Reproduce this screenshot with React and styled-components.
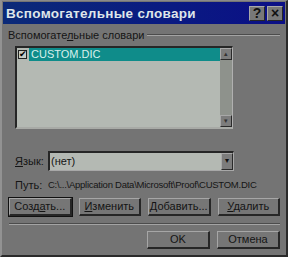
import React from 'react'
import styled, { createGlobalStyle } from 'styled-components'

const Global = createGlobalStyle`
    body {
        margin: 0;
        background: #6e6e6e;
        font-family: "Liberation Sans", Arial, sans-serif;
    }
`

const App = () => {
    return (
        <>
            <Global />
            <Window>
                <TitleBar>
                    <TitleText>Вспомогательные словари</TitleText>
                    <TitleButtons>
                        <CapButton>?</CapButton>
                        <CapButton>×</CapButton>
                    </TitleButtons>
                </TitleBar>
                <Body>
                    <GroupHeader>
                        <span>Вспомогате<u>л</u>ьные словари</span>
                        <GroupLine />
                    </GroupHeader>
                    <ListBox>
                        <ListItems>
                            <ListRow>
                                <Check>✔</Check>
                                <Selected>CUSTOM.DIC</Selected>
                            </ListRow>
                        </ListItems>
                        <ScrollBar>
                            <ScrollBtn>▴</ScrollBtn>
                            <ScrollBtn>▾</ScrollBtn>
                        </ScrollBar>
                    </ListBox>
                    <FieldRow>
                        <FieldLabel><u>Я</u>зык:</FieldLabel>
                        <Combo>
                            <ComboText>(нет)</ComboText>
                            <DropBtn>▾</DropBtn>
                        </Combo>
                    </FieldRow>
                    <PathRow>
                        <FieldLabel>Путь:</FieldLabel>
                        <PathText>C:\...\Application Data\Microsoft\Proof\CUSTOM.DIC</PathText>
                    </PathRow>
                    <ButtonRow>
                        <Button focused>Созд<u>а</u>ть...</Button>
                        <Button><u>И</u>зменить</Button>
                        <Button><u>Д</u>обавить...</Button>
                        <Button><u>У</u>далить</Button>
                    </ButtonRow>
                    <Separator />
                    <ButtonRow end>
                        <Button>OK</Button>
                        <Button>Отмена</Button>
                    </ButtonRow>
                </Body>
            </Window>
        </>
    )
}

export default App

const Window = styled.div`
    width: 288px;
    height: 257px;
    box-sizing: border-box;
    background: #747474;
    border-top: 1px solid #8a8a8a;
    border-left: 2px solid #929292;
    border-right: 2px solid #2a2a2a;
    border-bottom: 2px solid #2a2a2a;
    display: flex;
    flex-direction: column;
    color: #151515;
    overflow: hidden;
`

const TitleBar = styled.div`
    height: 22px;
    margin: 1px 1px 0 1px;
    background: linear-gradient(90deg, #0b2a78 0%, #0a1a82 60%, #0b0f86 100%);
    display: flex;
    align-items: center;
    justify-content: space-between;
    padding: 0 2px 0 3px;
`

const TitleText = styled.div`
    color: #dfe6ea;
    font-weight: bold;
    font-size: 13.5px;
    letter-spacing: 0.3px;
`

const TitleButtons = styled.div`
    display: flex;
    gap: 2px;
`

const CapButton = styled.div`
    width: 16px;
    height: 15px;
    box-sizing: border-box;
    background: #787878;
    border-top: 1px solid #a8a8a8;
    border-left: 1px solid #a8a8a8;
    border-right: 1px solid #262626;
    border-bottom: 1px solid #262626;
    display: flex;
    align-items: center;
    justify-content: center;
    font-weight: bold;
    font-size: 14px;
    line-height: 1;
    color: #111;
`

const Body = styled.div`
    flex: 1;
    display: flex;
    flex-direction: column;
    padding: 4px 6px 0 5px;
`

const GroupHeader = styled.div`
    display: flex;
    align-items: center;
    gap: 3px;
    font-size: 11px;
    height: 14px;
    margin-left: 1px;
`

const GroupLine = styled.div`
    flex: 1;
    height: 0;
    border-top: 1px solid #4c4c4c;
    border-bottom: 1px solid #a4a4a4;
`

const ListBox = styled.div`
    margin: 4px 0 0 8px;
    width: 218px;
    height: 83px;
    box-sizing: border-box;
    background: #b4b9b3;
    border-top: 2px solid #262626;
    border-left: 2px solid #262626;
    border-right: 1px solid #b0b0b0;
    border-bottom: 2px solid #a8aaa6;
    display: flex;
`

const ListItems = styled.div`
    flex: 1;
`

const ListRow = styled.div`
    display: flex;
    align-items: center;
    height: 13px;
`

const Check = styled.div`
    width: 9px;
    height: 9px;
    margin: 0 2px 0 1px;
    box-sizing: border-box;
    background: #c8ccc6;
    border: 1px solid #222;
    font-size: 9px;
    line-height: 7px;
    color: #000;
    text-align: center;
    overflow: hidden;
`

const Selected = styled.div`
    flex: 1;
    height: 13px;
    background: #0f8c8a;
    color: #d8f0ec;
    font-size: 11px;
    line-height: 13px;
    padding-left: 2px;
`

const ScrollBar = styled.div`
    width: 12px;
    background: #8e928c;
    display: flex;
    flex-direction: column;
    justify-content: space-between;
`

const ScrollBtn = styled.div`
    height: 12px;
    box-sizing: border-box;
    background: #7c7c7c;
    border-top: 1px solid #a8a8a8;
    border-left: 1px solid #a8a8a8;
    border-right: 1px solid #2a2a2a;
    border-bottom: 1px solid #2a2a2a;
    font-size: 7px;
    line-height: 10px;
    text-align: center;
    color: #333;
`

const FieldRow = styled.div`
    display: flex;
    align-items: center;
    margin-top: 22px;
    height: 20px;
`

const FieldLabel = styled.div`
    flex-shrink: 0;
    width: 33px;
    padding-left: 8px;
    font-size: 11px;
`

const Combo = styled.div`
    width: 186px;
    height: 20px;
    box-sizing: border-box;
    background: #b4b9b3;
    border-top: 2px solid #262626;
    border-left: 2px solid #262626;
    border-right: 1px solid #a8a8a8;
    border-bottom: 1px solid #a8a8a8;
    display: flex;
    align-items: stretch;
`

const ComboText = styled.div`
    flex: 1;
    font-size: 11px;
    line-height: 17px;
    padding-left: 1px;
`

const DropBtn = styled.div`
    width: 12px;
    box-sizing: border-box;
    background: #7c7c7c;
    border-top: 1px solid #a8a8a8;
    border-left: 1px solid #a8a8a8;
    border-right: 1px solid #2a2a2a;
    border-bottom: 1px solid #2a2a2a;
    font-size: 8px;
    line-height: 14px;
    text-align: center;
    color: #111;
`

const PathRow = styled.div`
    display: flex;
    align-items: center;
    margin-top: 6px;
    height: 15px;
`

const PathText = styled.div`
    font-size: 9.5px;
    letter-spacing: -0.25px;
    white-space: nowrap;
`

const ButtonRow = styled.div`
    display: flex;
    justify-content: ${p => (p.end ? 'flex-end' : 'space-between')};
    gap: 7px;
    margin-top: 6px;
    padding-left: 2px;
`

const Button = styled.div`
    width: 63px;
    height: 18px;
    box-sizing: border-box;
    background: #767676;
    border-top: 1px solid #a6a6a6;
    border-left: 1px solid #a6a6a6;
    border-right: 2px solid #262626;
    border-bottom: 2px solid #262626;
    outline: ${p => (p.focused ? '1px solid #111' : 'none')};
    font-size: 11px;
    line-height: 15px;
    text-align: center;
    color: #141414;
`

const Separator = styled.div`
    margin: 7px 0 0 2px;
    border-top: 1px solid #4c4c4c;
    border-bottom: 1px solid #a4a4a4;
`
